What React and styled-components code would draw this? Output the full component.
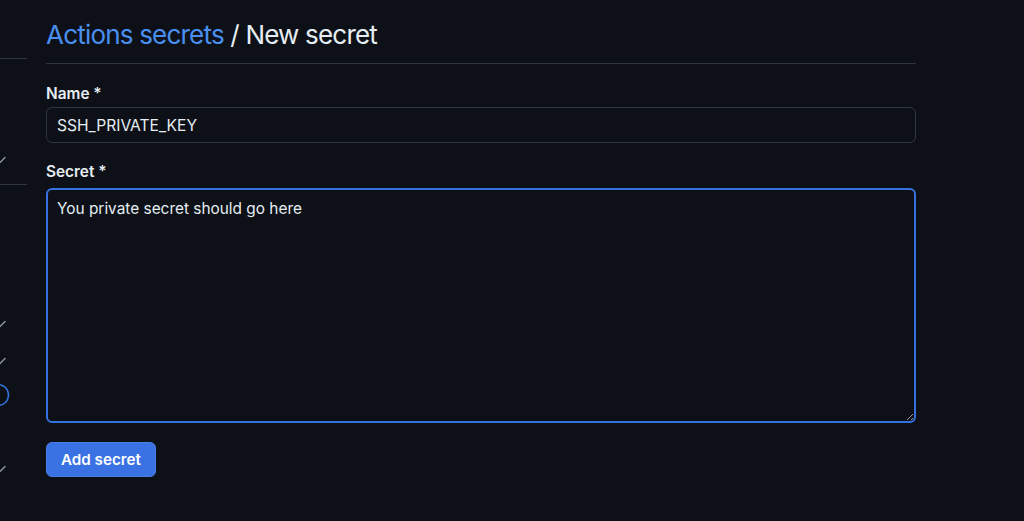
import styled, { createGlobalStyle } from 'styled-components'

const GlobalStyle = createGlobalStyle`
  body {
    margin: 0;
    background: #0d1117;
    font-family: Inter, "Liberation Sans", Arial, sans-serif;
    color: #e6edf3;
  }
`

function Check() {
  return (
    <svg width="16" height="16" viewBox="0 0 16 16" fill="none">
      <path d="M3 8.5l3 3 7-7" stroke="#8b949e" strokeWidth="1.5" strokeLinecap="round" strokeLinejoin="round" />
    </svg>
  )
}

function Dot() {
  return (
    <svg width="24" height="24" viewBox="0 0 24 24" fill="none">
      <circle cx="12" cy="12" r="10.5" stroke="#3572e0" strokeWidth="1.5" />
      <circle cx="12" cy="12" r="1.5" fill="#3572e0" />
    </svg>
  )
}

function App() {
  return (
    <>
      <GlobalStyle />
      <Page>
        <Sidebar>
          <Rule $top={58} />
          <Item $top={94} $shift={-8}><Check /></Item>
          <Rule $top={15} />
          <Item $top={132} $shift={-8}><Check /></Item>
          <Item $top={21} $shift={-8}><Check /></Item>
          <Item $top={13} $shift={-14}><Dot /></Item>
          <Item $top={55} $shift={-8}><Check /></Item>
        </Sidebar>
        <Main>
          <Header>
            <Title>
              <Crumb href="#">Actions secrets</Crumb> / New secret
            </Title>
          </Header>
          <Field>
            <Label>Name *</Label>
            <Input defaultValue="SSH_PRIVATE_KEY" />
          </Field>
          <Field $gap={19}>
            <Label>Secret *</Label>
            <TextArea defaultValue="You private secret should go here" />
          </Field>
          <Button type="button">Add secret</Button>
        </Main>
      </Page>
    </>
  )
}

const Page = styled.div`
  display: flex;
  gap: 19px;
  min-height: 521px;
`

const Sidebar = styled.aside`
  width: 27px;
  flex-shrink: 0;
  overflow: hidden;
  display: flex;
  flex-direction: column;
`

const Rule = styled.div`
  height: 1px;
  background: #30363d;
  margin-top: ${(p) => p.$top}px;
`

const Item = styled.div`
  margin-top: ${(p) => p.$top}px;
  margin-left: ${(p) => p.$shift}px;
  display: flex;
`

const Main = styled.main`
  width: 870px;
  display: flex;
  flex-direction: column;
  align-items: flex-start;
`

const Header = styled.div`
  align-self: stretch;
  padding: 19px 0 12px;
  border-bottom: 1px solid #30363d;
`

const Title = styled.h1`
  margin: 0;
  font-size: 26px;
  line-height: 32px;
  font-weight: 400;
  letter-spacing: -0.8px;
  color: #e6edf3;
`

const Crumb = styled.a`
  color: #4a8ff0;
  text-decoration: none;
`

const Field = styled.div`
  align-self: stretch;
  display: flex;
  flex-direction: column;
  gap: 3px;
  margin-top: ${(p) => p.$gap || 20}px;
`

const Label = styled.label`
  font-size: 15.4px;
  line-height: 20px;
  font-weight: 600;
  color: #e6edf3;
`

const Input = styled.input`
  box-sizing: border-box;
  height: 36px;
  padding: 0 10px;
  background: #0d1117;
  border: 1px solid #30363d;
  border-radius: 6px;
  color: #e6edf3;
  font: inherit;
  font-size: 15.6px;
  outline: none;
`

const TextArea = styled.textarea`
  box-sizing: border-box;
  height: 235px;
  margin-top: 3px;
  padding: 9px 9px;
  background: #0d1117;
  border: 2px solid #3572e0;
  border-radius: 6px;
  color: #e6edf3;
  font: inherit;
  font-size: 15.4px;
  line-height: 20px;
  outline: none;
  resize: vertical;
`

const Button = styled.button`
  margin-top: 19px;
  height: 35px;
  padding: 0 14px;
  background: #3a72e3;
  border: 1px solid #4a7fe6;
  border-radius: 6px;
  color: #ffffff;
  font-family: inherit;
  font-size: 15.2px;
  font-weight: 600;
  cursor: pointer;
`

export default App
